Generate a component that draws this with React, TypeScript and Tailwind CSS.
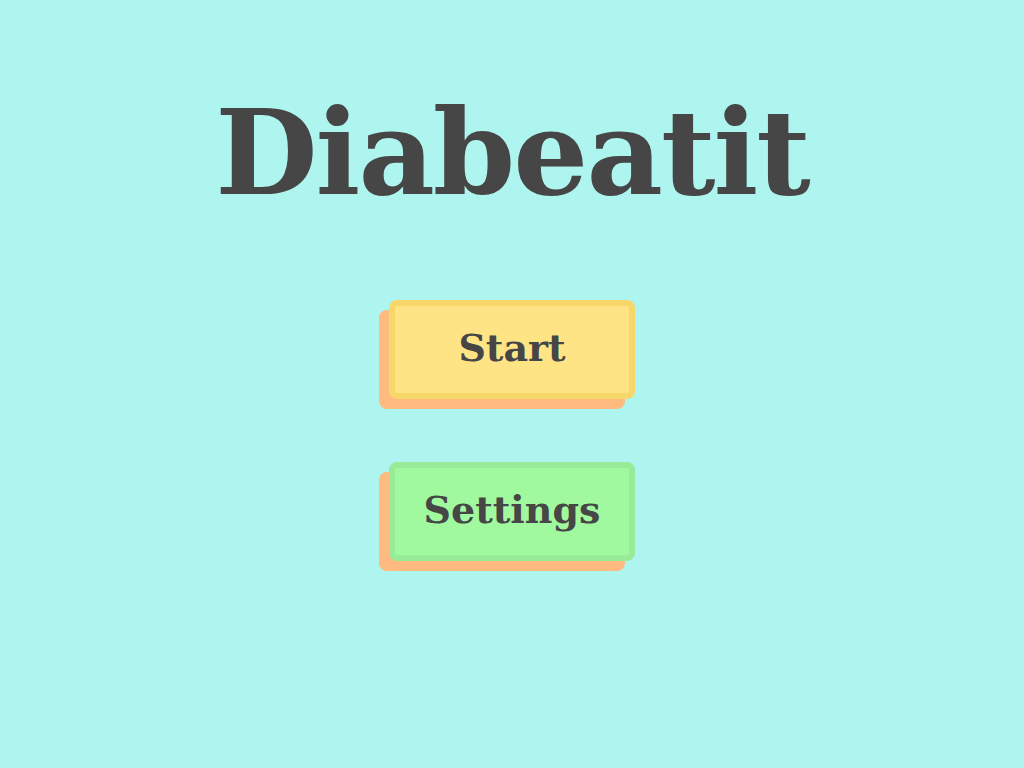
export default function App() {
  const font = { fontFamily: '"DejaVu Serif", "Liberation Serif", serif' };
  return (
    <div className="w-[1024px] h-[768px] bg-[#aff5ef] flex flex-col items-center text-[#464646]" style={font}>
      <h1 className="mt-[83px] text-[118px] leading-[140px] font-bold tracking-[-2px]">Diabeatit</h1>
      <div className="mt-[77px] flex flex-col items-center gap-[63px]">
        <button className="w-[246px] h-[99px] rounded-lg border-[6px] border-[#f8d76a] bg-[#ffe486] shadow-[-10px_10px_0_#ffba80] text-[38px] font-bold pb-1">
          Start
        </button>
        <button className="w-[246px] h-[99px] rounded-lg border-[6px] border-[#98ec98] bg-[#a0f99e] shadow-[-10px_10px_0_#ffba80] text-[38px] font-bold pb-1">
          Settings
        </button>
      </div>
    </div>
  );
}
